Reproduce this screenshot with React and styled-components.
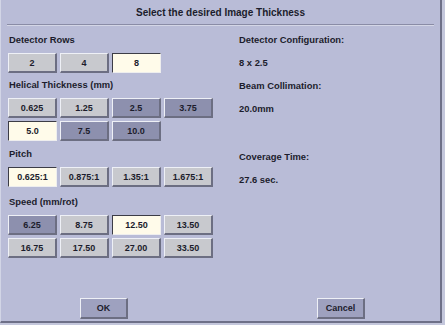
import React from 'react'
import styled, { createGlobalStyle } from 'styled-components'

const bg = '#b9bcd7'
const ink = '#1c1c2c'

const GlobalStyle = createGlobalStyle`
  html, body {
    margin: 0;
    padding: 0;
    background: #c4c7dc;
    width: 445px;
    height: 325px;
    overflow: hidden;
  }
  body {
    font-family: "Liberation Sans", Arial, sans-serif;
    font-weight: bold;
    font-size: 9px;
    color: ${ink};
  }
`

const Dialog = styled.div`
  box-sizing: border-box;
  width: 442px;
  height: 323px;
  background: ${bg};
  border-left: 1px solid #d2d5e6;
  border-right: 2px solid #6e7088;
  border-bottom: 2px solid #6e7088;
  display: flex;
  flex-direction: column;
`

const Title = styled.div`
  height: 24px;
  line-height: 26px;
  font-size: 10px;
  text-align: center;
  margin: 0 6px 0 6px;
  border-bottom: 1px solid #8a8ca6;
  box-shadow: 0 1px 0 #d4d6e6;
`

const Body = styled.div`
  display: grid;
  grid-template-columns: 231px 1fr;
  padding-left: 7px;
`

const Left = styled.div`
  display: flex;
  flex-direction: column;
  padding-top: 9px;
`

const Section = styled.div`
  display: flex;
  flex-direction: column;
  margin-top: ${p => p.$space || 0}px;
`

const Label = styled.div`
  height: 12px;
  line-height: 12px;
  font-size: 9.4px;
  margin-bottom: 7px;
  padding-left: 1px;
`

const Grid = styled.div`
  display: grid;
  grid-template-columns: repeat(4, 49px);
  column-gap: 3px;
  row-gap: 3px;
`

const fills = {
  gray: '#c8c9ce',
  dark: '#8d90ae',
  on: '#fffbea',
}

const Button = styled.div`
  box-sizing: border-box;
  height: 20px;
  display: flex;
  align-items: center;
  justify-content: center;
  background: ${p => fills[p.$tone || 'gray']};
  border-style: solid;
  border-width: ${p => (p.$tone === 'on' ? '1px' : '1px 2px 2px 1px')};
  border-color: ${p =>
    p.$tone === 'on'
      ? '#3c3c46 #eeeeee #eeeeee #3c3c46'
      : '#eef0f6 #6c6e82 #6c6e82 #eef0f6'};
  color: ${ink};
`

const Right = styled.div`
  display: flex;
  flex-direction: column;
  padding-top: 3px;
`

const Info = styled.div`
  height: 23px;
  line-height: 23px;
  font-size: 9.4px;
  margin-top: ${p => (p.$gap ? '25px' : '0')};
`

const Footer = styled.div`
  margin-top: auto;
  display: flex;
  gap: 189px;
  padding: 0 0 2px 79px;
`

const FooterButton = styled(Button)`
  width: 48px;
  height: 21px;
  background: #9ea1bf;
`

const rows = [
  { label: 'Detector Rows', space: 0, items: [['2'], ['4'], ['8', 'on']] },
  {
    label: 'Helical Thickness (mm)',
    space: 6,
    items: [['0.625'], ['1.25'], ['2.5', 'dark'], ['3.75', 'dark'], ['5.0', 'on'], ['7.5', 'dark'], ['10.0', 'dark']],
  },
  { label: 'Pitch', space: 7, items: [['0.625:1', 'on'], ['0.875:1'], ['1.35:1'], ['1.675:1']] },
  {
    label: 'Speed (mm/rot)',
    space: 9,
    items: [['6.25', 'dark'], ['8.75'], ['12.50', 'on'], ['13.50'], ['16.75'], ['17.50'], ['27.00'], ['33.50']],
  },
]

const App = () => {
  return (
    <>
      <GlobalStyle />
      <Dialog>
        <Title>Select the desired Image Thickness</Title>
        <Body>
          <Left>
            {rows.map(row => (
              <Section key={row.label} $space={row.space}>
                <Label>{row.label}</Label>
                <Grid>
                  {row.items.map(([text, tone]) => (
                    <Button key={text} $tone={tone}>{text}</Button>
                  ))}
                </Grid>
              </Section>
            ))}
          </Left>
          <Right>
            <Info>Detector Configuration:</Info>
            <Info>8 x 2.5</Info>
            <Info>Beam Collimation:</Info>
            <Info>20.0mm</Info>
            <Info $gap>Coverage Time:</Info>
            <Info>27.6 sec.</Info>
          </Right>
        </Body>
        <Footer>
          <FooterButton>OK</FooterButton>
          <FooterButton>Cancel</FooterButton>
        </Footer>
      </Dialog>
    </>
  )
}

export default App
